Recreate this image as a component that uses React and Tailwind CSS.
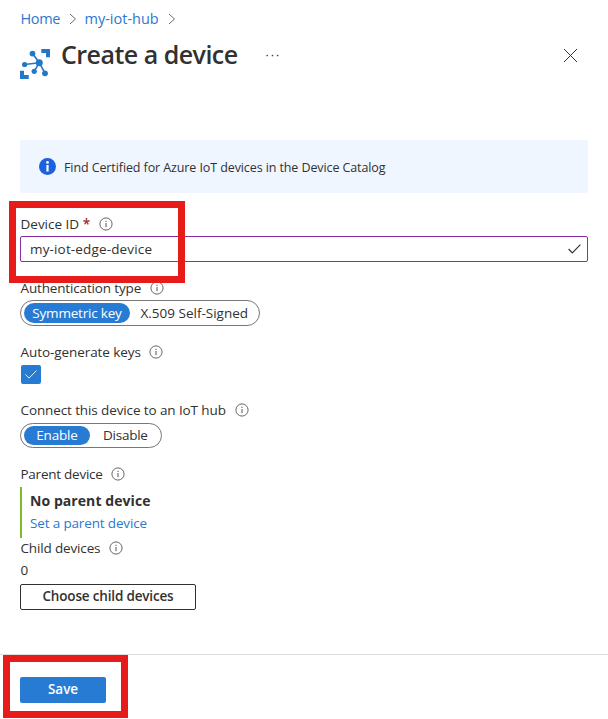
function Info({ className = "" }) {
  return (
    <svg className={"shrink-0 " + className} width="14" height="14" viewBox="0 0 14 14" fill="none" stroke="#555">
      <circle cx="7" cy="7" r="6.1" strokeWidth="0.9" />
      <path d="M7 6v4.2M7 3.8v1.2" strokeWidth="1" />
    </svg>
  );
}

function Label({ children, className = "" }) {
  return (
    <div className={"flex h-5 items-center gap-2 whitespace-nowrap pl-[0.5px] text-[13.5px] leading-5 " + className}>
      {children}
    </div>
  );
}

function Chevron() {
  return (
    <svg width="8" height="12" viewBox="0 0 8 12" fill="none" stroke="#6b6b6b" strokeWidth="1">
      <path d="M1 1l5.5 5L1 11" />
    </svg>
  );
}

function HubIcon() {
  return (
    <svg width="30" height="30" viewBox="0 0 30 30" fill="#2377c9" stroke="#2377c9">
      <path d="M21.3 0H30v8.3h-4V4h-4.7zM0 21.7h4V26h4.7v4H0z" stroke="none" />
      <path d="M12.5 4.6L19.3 13.7M4.6 15.5L19.3 13.7M14.2 22.3l5.1-8.6M25 24.3l-5.7-10.6" strokeWidth="1.6" />
      <g stroke="none">
        <circle cx="12.5" cy="4.6" r="2.9" />
        <circle cx="4.6" cy="15.5" r="2.6" />
        <circle cx="14.2" cy="22.3" r="2.6" />
        <circle cx="25" cy="24.3" r="2.9" />
        <circle cx="19.3" cy="13.7" r="3.5" />
      </g>
    </svg>
  );
}

export default function App() {
  return (
    <div className="relative flex h-[719px] w-[608px] flex-col overflow-hidden bg-white font-['Open_Sans','Noto_Sans',sans-serif] text-[#323130]">
      <nav className="mt-[9px] flex h-5 items-center whitespace-nowrap pl-[20.5px] text-[14.5px] leading-5 text-[#2b78d0]">
        <span className="w-[40px] tracking-[-0.35px]">Home</span>
        <span className="ml-2 mr-2"><Chevron /></span>
        <span className="w-[75px] tracking-[0px]">my-iot-hub</span>
        <span className="ml-2"><Chevron /></span>
      </nav>

      <header className="flex h-[60px] pl-5">
        <div className="mt-5"><HubIcon /></div>
        <h1 className="ml-[11px] mt-[9px] w-[178px] whitespace-nowrap text-[25px] font-semibold leading-8 tracking-[-0.52px]">Create a device</h1>
        <svg className="ml-[27px] mt-[25px]" width="13" height="3" viewBox="0 0 13 3" fill="#444">
          <circle cx="1.2" cy="1.5" r="0.85" /><circle cx="6.5" cy="1.5" r="0.85" /><circle cx="11.6" cy="1.5" r="0.85" />
        </svg>
        <svg className="ml-auto mr-[31px] mt-5" width="13" height="13" viewBox="0 0 13 13" stroke="#333" strokeWidth="1">
          <path d="M0 0l13 13M13 0L0 13" />
        </svg>
      </header>

      <main className="flex flex-col px-5">
        <div className="mt-[51px] flex h-[53px] items-center rounded-[2px] bg-[#f0f6ff] pl-[19px]">
          <svg width="17" height="17" viewBox="0 0 17 17">
            <circle cx="8.5" cy="8.5" r="8.5" fill="#1f60dc" />
            <circle cx="8.5" cy="4.4" r="1.4" fill="#fff" />
            <path d="M7.4 7h2.2v6.5H7.4z" fill="#fff" />
          </svg>
          <span className="ml-2 mt-[3px] whitespace-nowrap text-[12.5px] tracking-[-0.1px]">Find Certified for Azure IoT devices in the Device Catalog</span>
        </div>

        <Label className="mt-[21px]">
          <span className="w-[70.5px]">Device ID <span className="font-semibold text-[#a4262c]">*</span></span><Info />
        </Label>
        <div className="mt-[2px] flex h-[26px] items-center justify-between rounded-[2px] border border-[#8a2da5] pl-[9px] pr-[6px] text-[13.5px]">
          <span className="tracking-[0.15px]">my-iot-edge-device</span>
          <svg width="13" height="10" viewBox="0 0 13 10" fill="none" stroke="#333" strokeWidth="1.2"><path d="M.6 5l3.7 3.8L12.4.7" /></svg>
        </div>

        <Label className="mt-4"><span className="w-[121.5px] tracking-[-0.15px]">Authentication type</span><Info /></Label>
        <div className="mt-[2px] flex h-[26px] w-[240px] items-center rounded-full border border-[#777] pl-[3px] text-[13.5px]">
          <span className="flex h-5 w-[106px] items-center justify-center whitespace-nowrap rounded-full bg-[#287bd3] tracking-[-0.2px] text-white">Symmetric key</span>
          <span className="ml-[10.5px] whitespace-nowrap">X.509 Self-Signed</span>
        </div>

        <Label className="mt-4"><span className="w-[120.5px] tracking-[-0.07px]">Auto-generate keys</span><Info /></Label>
        <div className="ml-px mt-[3px] flex h-[19px] w-5 items-center justify-center rounded-[2px] bg-[#287bd3]">
          <svg width="12" height="9" viewBox="0 0 12 9" fill="none" stroke="#fff" strokeWidth="0.9"><path d="M.4 4.5l3.6 3.6L11.6.5" /></svg>
        </div>

        <Label className="mt-4"><span className="w-[206.5px] tracking-[-0.11px]">Connect this device to an IoT hub</span><Info /></Label>
        <div className="mt-[3px] flex h-[25px] w-[142px] items-center rounded-full border border-[#777] pl-[3px] text-[13.5px]">
          <span className="flex h-[19px] w-[66px] items-center justify-center rounded-full bg-[#287bd3] tracking-[-0.15px] text-white">Enable</span>
          <span className="ml-[13px] tracking-[-0.25px]">Disable</span>
        </div>

        <Label className="mt-4"><span className="w-[82.5px] tracking-[-0.25px]">Parent device</span><Info /></Label>
        <div className="mt-[3px] flex h-[51px] flex-col whitespace-nowrap border-l-2 border-[#7fba2a] pl-2">
          <strong className="mt-1 text-[14px] font-bold leading-5 tracking-[0.07px]">No parent device</strong>
          <span className="mt-[2px] text-[13.5px] leading-5 tracking-[-0.15px] text-[#2b78d0]">Set a parent device</span>
        </div>
        <Label><span className="w-[80.5px] tracking-[-0.15px]">Child devices</span><Info /></Label>
        <div className="mt-[2px] h-5 pl-[0.5px] text-[13.5px] leading-5">0</div>
        <button className="mt-1 flex h-[26px] w-[176px] items-center justify-center whitespace-nowrap rounded-[2px] border border-[#323130] pb-px text-[13.5px] font-semibold tracking-[-0.17px]">Choose child devices</button>
      </main>

      <footer className="mt-11 border-t border-[#dedede] px-5 pt-[22px]">
        <button className="flex h-[26px] w-[86px] items-center justify-center rounded-[2px] bg-[#287bd3] pb-px text-[13.5px] font-semibold text-white">Save</button>
      </footer>

      <div className="absolute left-[9px] top-[201px] h-[82px] w-[176px] border-[7px] border-[#e81b1b]" />
      <div className="absolute left-[3px] top-[655px] h-[63px] w-[125px] border-[7px] border-[#e81b1b]" />
    </div>
  );
}
